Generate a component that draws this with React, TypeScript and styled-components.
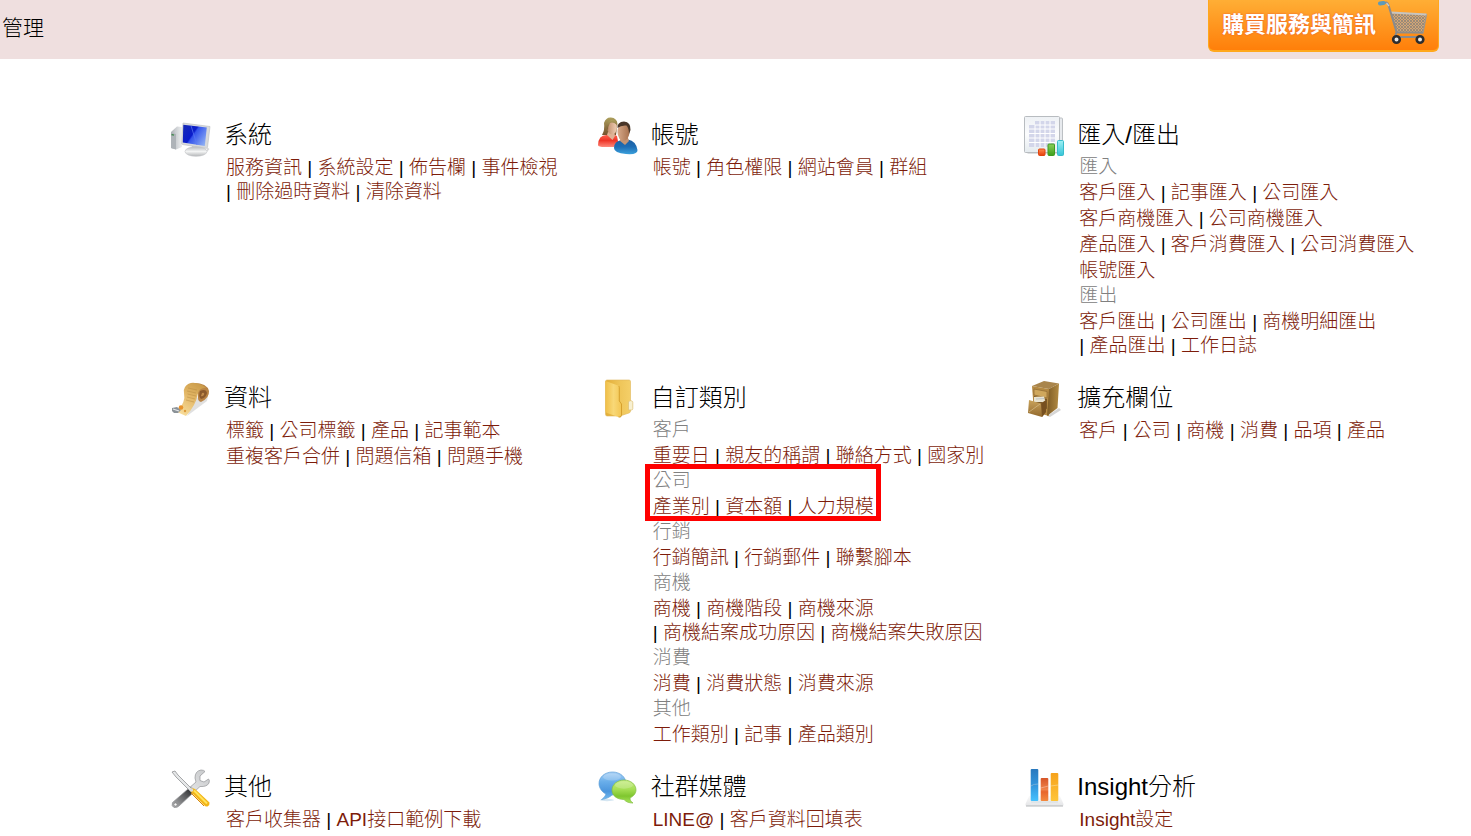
import React, { Fragment, ReactNode } from "react";
import styled, { createGlobalStyle } from "styled-components";

const GlobalStyle = createGlobalStyle`
  * { box-sizing: border-box; }
  body {
    margin: 0;
    background: #fff;
    color: #000;
    font-family: "Liberation Sans", "Noto Sans CJK TC", sans-serif;
    font-weight: 300;
  }
`;

const Header = styled.header`
  display: flex;
  align-items: flex-start;
  justify-content: space-between;
  height: 59px;
  padding: 0 32px 0 2px;
  background: #efdfdf;
`;

const PageTitle = styled.h1`
  margin: 0;
  font-size: 21px;
  font-weight: 300;
  line-height: 56px;
`;

const BuyButton = styled.button`
  display: flex;
  align-items: center;
  gap: 2px;
  height: 52px;
  padding: 0 10px 0 13px;
  border: 0 solid #ffa81c;
  border-width: 0 1px 2px;
  border-radius: 0 0 6px 6px;
  background: linear-gradient(#ffae35, #ff7f0a);
  color: #fff;
  font-family: inherit;
  font-size: 22px;
  font-weight: 700;
  line-height: 52px;
  text-shadow: 0 0 2px #e8502a;
  cursor: pointer;

  svg { align-self: flex-start; }
`;

const Grid = styled.main`
  display: grid;
  grid-template-columns: repeat(3, minmax(0, 1fr));
  row-gap: 21px;
  padding: 57px 21px 0 170px;
`;

const Card = styled.section`
  display: grid;
  grid-template-columns: 40px minmax(0, 1fr);
  column-gap: 14px;
  align-items: start;
`;

const CardTitle = styled.h2`
  margin: 0;
  padding: 3px 0;
  font-size: 24px;
  font-weight: 300;
  line-height: 32px;
`;

const CardBody = styled.div`
  padding-left: 2px;
  font-size: 19px;
  line-height: 24px;
`;

const GroupLabel = styled.h3`
  margin: 0;
  padding-top: 1px;
  color: #808080;
  font-size: 19px;
  font-weight: 300;
  line-height: 24px;
`;

const LinkRow = styled.div`
  padding-top: 2px;
`;

const LinkItem = styled.span`
  white-space: nowrap;
`;

const MenuLink = styled.a`
  color: #7d1c0a;
  text-decoration: none;

  &:hover { text-decoration: underline; }
`;

const Group = styled.div<{ $marked?: boolean }>`
  position: relative;
  width: fit-content;

  &::after {
    content: ${(p) => (p.$marked ? '""' : "none")};
    position: absolute;
    inset: -4px -7px -2px -8px;
    border: 5px solid #f00;
    pointer-events: none;
  }
`;

const Icon = ({ children }: { children: ReactNode }) => (
  <svg width="40" height="40" viewBox="0 0 40 40" overflow="visible" aria-hidden="true">
    {children}
  </svg>
);

type Stop = [number, string];
const Gradient = ({ id, stops, flat }: { id: string; stops: Stop[]; flat?: boolean }) => (
  <linearGradient id={id} x1="0" y1="0" x2={flat ? 1 : 0} y2={flat ? 0 : 1}>
    {stops.map(([offset, color]) => (
      <stop key={offset} offset={offset} stopColor={color} />
    ))}
  </linearGradient>
);

const ComputerIcon = () => (
  <Icon>
    <defs>
      <linearGradient id="screen" x1="0" y1="0.2" x2="1" y2="0.8">
        <stop offset="0" stopColor="#1428b8" />
        <stop offset="0.4" stopColor="#0a1ccb" />
        <stop offset="0.46" stopColor="#3555ec" />
        <stop offset="1" stopColor="#8fb0f4" />
      </linearGradient>
      <Gradient id="tower" flat stops={[[0, "#a9adb2"], [0.4, "#c9ccd0"], [1, "#eceeef"]]} />
      <Gradient id="stand" stops={[[0, "#b9bcbf"], [0.5, "#f3f4f4"], [1, "#b4b6b8"]]} />
    </defs>
    <path d="M1 16 7 10.500 12 11V31L6 33.500 1 32Z" fill="url(#tower)" />
    <path d="M1 17 6 18V33.500L1 32Z" fill="#aeb3b8" />
    <path d="M1.500 18.500 4 19.200" stroke="#438a4e" strokeWidth="1.400" />
    <path d="M13 7 40 10.500 37.500 31.500Q37 32.500 36 32.300L12.500 28.500Q11.500 28.200 11.700 27Z" fill="#d8dadc" stroke="#b9bcbf" strokeWidth=".6" />
    <path d="M13.300 8.800 36.800 11.500 34.800 30 12.800 26.500Z" fill="url(#screen)" />
    <path d="M21 9.700 27 29" stroke="#5a78f5" strokeWidth=".7" />
    <path d="M22 30 31 31.500 30 36H22Z" fill="#c4c6c8" />
    <ellipse cx="26" cy="35.500" rx="11" ry="4.800" fill="url(#stand)" stroke="#c3c5c7" strokeWidth=".6" />
    <path d="M37 31 39.500 33 37 36" fill="#d8d9da" />
  </Icon>
);

const UsersIcon = () => (
  <Icon>
    <defs>
      <Gradient id="red" stops={[[0, "#ff6a55"], [0.5, "#ee3427"], [1, "#ff8a7c"]]} />
      <Gradient id="blue" stops={[[0, "#1c5fa3"], [0.5, "#1f6db4"], [1, "#3aa0dc"]]} />
      <Gradient id="hair" stops={[[0, "#ada05d"], [1, "#76522e"]]} />
      <Gradient id="skinA" flat stops={[[0, "#c08d6b"], [1, "#f0cfb5"]]} />
      <Gradient id="skinB" flat stops={[[0, "#d6a98a"], [1, "#a8714d"]]} />
    </defs>
    <path d="M7 7Q9 1 14 1.500 20 2 20.500 8L19 19H5Q8 14 7 7Z" fill="url(#hair)" />
    <path d="M10 19Q1.500 18.500 1 29 1 31 8 31H17L21.500 28 20 20 16 18Z" fill="url(#red)" />
    <path d="M11 16H17L18 20 15.500 24 10 19Z" fill="#dfb296" />
    <ellipse cx="15" cy="11.500" rx="4.900" ry="7" fill="url(#skinA)" />
    <path d="M9.500 11Q10 4 16 4 20 5 20 9 16 5.500 13 7 11 10 11 15Z" fill="url(#hair)" />
    <path d="M25 24Q17 25 17 32 17 37 29 38 41 39 40.500 34 39 25 31 23.500Z" fill="url(#blue)" />
    <path d="M24 22H31L32 25 28 29 22.500 24.500Z" fill="#c59474" />
    <ellipse cx="26.500" cy="16" rx="6" ry="8.700" fill="url(#skinB)" />
    <path d="M20.500 12Q20 6 27 5.500 34 6 33.500 14L32 18Q32 12 29.500 9.500 24 9 20.500 12Z" fill="#493629" />
  </Icon>
);

const SheetIcon = () => (
  <Icon>
    <defs>
      <Gradient id="sheet" stops={[[0, "#eef1f5"], [0.5, "#fbfcfd"], [1, "#e5ebef"]]} />
      <Gradient id="barRed" stops={[[0, "#ff8b4e"], [1, "#e63e0c"]]} />
      <Gradient id="barGreen" stops={[[0, "#8bcf5a"], [1, "#3c9e1c"]]} />
      <Gradient id="barCyan" stops={[[0, "#9ff0f4"], [1, "#35c4d8"]]} />
    </defs>
    <rect x="4" y="2" width="35.500" height="35" rx="1" fill="#e7eaee" stroke="#bcc0c4" />
    <rect x="1.500" y=".5" width="35" height="36" rx="1" fill="url(#sheet)" stroke="#b8bcc0" />
    <path d="M12 5H32V31H6V9H12Z" fill="#d3d6ea" />
    <path d="M6 13H32M6 17.500H32M6 22H32M6 26.500H32M12 9H32M12 9V31M17 5V31M22 5V31M27 5V31" stroke="#fff" strokeWidth="1" />
    <rect x="15.500" y="33" width="6.500" height="6.500" rx="1" fill="url(#barRed)" stroke="#e0440e" />
    <rect x="25" y="28" width="6.500" height="11.500" rx="1" fill="url(#barGreen)" stroke="#3f9b20" />
    <rect x="34.500" y="24.500" width="6" height="15" rx="1" fill="url(#barCyan)" stroke="#37bccb" />
  </Icon>
);

const ScrollIcon = () => (
  <Icon>
    <defs>
      <linearGradient id="paper" x1=".8" y1="0" x2=".2" y2="1">
        <stop offset="0" stopColor="#c99a48" />
        <stop offset=".45" stopColor="#e3b766" />
        <stop offset="1" stopColor="#f8de9d" />
      </linearGradient>
    </defs>
    <path d="M17 37 37 22 38 17 26 19Z" fill="#ccc" opacity=".6" />
    <path d="M24 4Q37 4 39 12 39.500 19 31 23 27 22 28 15Z" fill="#b98445" />
    <path d="M30 12Q36 9 37 14 36 19 31 20 28 17 30 12Z" fill="#8b5a2d" />
    <path d="M32 14Q35 13 34 16 32 18 31 17Z" fill="#c08b4c" />
    <path d="M15 8Q19 3 25 4 33 5 36 9 29 8 27.500 16 26 26 16 37L7 33Q16 23 14 14 13.500 10 15 8Z" fill="url(#paper)" />
    <path d="M18 9 27 11M17 12 26 14M17.500 15 26 17M17 18 25 20M16 21 24 23" stroke="#b88a40" strokeWidth=".8" opacity=".6" />
    <path d="M2 29 7 28 11 31 8 34 4 34 2 32Z" fill="#8b9298" />
    <path d="M3 30 9 32" stroke="#e5e8ea" strokeWidth="1.200" />
    <circle cx="11" cy="28.500" r="2.300" fill="#e8922b" />
    <circle cx="15" cy="32" r="1.200" fill="#dc9a39" />
  </Icon>
);

const FolderIcon = () => (
  <Icon>
    <defs>
      <Gradient id="folderBack" flat stops={[[0, "#e2ad36"], [0.6, "#efc65a"], [1, "#f4cf68"]]} />
      <Gradient id="folderFront" flat stops={[[0, "#f0bf48"], [0.5, "#f8d877"], [1, "#f3c653"]]} />
    </defs>
    <path d="M10 1H32Q33.500 1 33.500 2.500V32Q33.500 33.500 32 34L23 37H10Q8.500 37 8.500 35V2.500Q8.500 1 10 1Z" fill="url(#folderBack)" stroke="#dfb75a" strokeWidth=".6" />
    <path d="M33 21.500 35 22Q35.800 22.300 35.800 23.500V29.500Q35.800 31 34.500 31H31.500V23Z" fill="#f7f0d2" stroke="#dcbf73" strokeWidth=".7" />
    <path d="M8.500 2 21 6.500Q22.300 7 22.300 8.500V22L24.500 25V36Q24.300 39 21.500 38L10 34Q8.500 33.500 8.500 32Z" fill="url(#folderFront)" />
    <path d="M21.500 7Q22.300 7.500 22.300 8.500V22L24.500 25V36Q24.300 39 21.500 38" fill="none" stroke="#cf9722" strokeWidth=".8" />
  </Icon>
);

const CabinetIcon = () => (
  <Icon>
    <defs>
      <Gradient id="side" flat stops={[[0, "#7d5b26"], [1, "#b28a42"]]} />
      <Gradient id="drawer" stops={[[0, "#c9a35c"], [1, "#93692d"]]} />
    </defs>
    <path d="M24 37 36 29 38 31 27 38Z" fill="#bbb" opacity=".6" />
    <path d="M9 7 21 2 36 4.500 26 10Z" fill="#a9854c" />
    <path d="M9 7 26 10V37L11 33Z" fill="#b58a43" />
    <path d="M26 10 36 4.500 34.500 29 24 37Z" fill="url(#side)" />
    <path d="M11 10 24 12.500V19L11 16Z" fill="#cfa75c" stroke="#8d6830" strokeWidth=".7" />
    <path d="M11 17 24 20V30L11 26Z" fill="#7a5828" />
    <path d="M11 18 21 17.500 22.500 23 11 23Z" fill="#e9e4d2" />
    <path d="M13 20 21 19.500" stroke="#b3bcc4" strokeWidth=".8" />
    <path d="M6 21 18 24.500 23 21V33L19 38 5 34Z" fill="url(#drawer)" />
    <path d="M18 24.500 19 38 23 33V21Z" fill="#775020" />
    <path d="M6 33 17 25" stroke="#dec796" strokeWidth="1" opacity=".6" />
  </Icon>
);

const ToolsIcon = () => (
  <Icon>
    <defs>
      <linearGradient id="steel" x1="1" y1="0" x2="0" y2="1">
        <stop offset="0" stopColor="#c5c7c9" />
        <stop offset=".45" stopColor="#dfe0e1" />
        <stop offset=".55" stopColor="#3c3d3f" />
        <stop offset="1" stopColor="#b6b7b9" />
      </linearGradient>
    </defs>
    <path d="M31 2Q25 3 25 10L26 14 2.500 34.500Q1 38 4 39.500 7 40 9 38L30 18.500Q37 19 39 15 40 12 38.500 11L34 14 30 12.500 30 8 35 3.500Q34 2 31 2Z" fill="url(#steel)" stroke="#929496" strokeWidth=".7" />
    <circle cx="5.500" cy="36.500" r="1.600" fill="#f7f7f7" stroke="#777" strokeWidth=".6" />
    <path d="M2 4 5 3 8 7 22 21 20 23 6 9Z" fill="#e5e7e8" stroke="#909294" strokeWidth=".8" />
    <path d="M22 20 25 21 39.500 34.500Q40 37 37.500 38.500 35.500 39 34 37L20 23Z" fill="#f3b516" />
    <path d="M24 22.500 37 35.500" stroke="#ffe35c" strokeWidth="2" />
    <path d="M21 25 34 38" stroke="#d8860b" strokeWidth="1" />
    <circle cx="21.500" cy="22" r="1.800" fill="#d9dadb" />
  </Icon>
);

const ChatIcon = () => (
  <Icon>
    <defs>
      <Gradient id="chatBlue" stops={[[0, "#a9d0f5"], [0.35, "#69aeea"], [0.7, "#4c96dd"], [1, "#72bbf0"]]} />
      <Gradient id="chatGreen" stops={[[0, "#c4ec80"], [0.4, "#a6df55"], [0.7, "#7fc62f"], [1, "#a9e65b"]]} />
    </defs>
    <ellipse cx="10" cy="32" rx="7" ry="1.200" fill="#b9d5ea" opacity=".6" />
    <path d="M15.500 4C8 4 2 9 2 15.500 2 20 5 24 9 26 8 29 6 30.500 4.500 31.500 9 31 13 29 15 27 23 27 29 22 29 15.500S23 4 15.500 4Z" fill="url(#chatBlue)" stroke="#5d9fd8" strokeWidth=".7" />
    <path d="M27 12C20.500 12 15 16.300 15 22S20 31.500 27 31.500C29 34 32 35 36 35 33.500 33.500 33 31.500 33 30 37 28 39 25 39 22 39 16.300 33.500 12 27 12Z" fill="url(#chatGreen)" stroke="#83bd43" strokeWidth=".7" />
    <ellipse cx="27" cy="17" rx="9" ry="3.700" fill="#fff" opacity=".2" />
    <ellipse cx="15" cy="9" rx="9" ry="3.500" fill="#fff" opacity=".2" />
  </Icon>
);

const InsightIcon = () => (
  <Icon>
    <defs>
      <Gradient id="iBlue" stops={[[0, "#2878bd"], [0.5, "#3295dc"], [1, "#46c2ff"]]} />
      <Gradient id="iRed" stops={[[0, "#d65528"], [0.5, "#f0834a"], [0.6, "#e8652b"], [1, "#f38a3e"]]} />
      <Gradient id="iGold" stops={[[0, "#f6a21b"], [1, "#ffc539"]]} />
      <Gradient id="base" stops={[[0, "#fafafa"], [1, "#e4e5e7"]]} />
    </defs>
    <path d="M6 28H37L40.500 36V37Q40.500 38 39 38H4Q2.500 38 2.500 37V36Z" fill="url(#base)" />
    <path d="M3 38H40" stroke="#b5b7ba" strokeWidth="1.200" />
    <path d="M8 34H35" stroke="#c9d6dd" strokeWidth="1" opacity=".7" />
    <rect x="7.700" y="1" width="7.600" height="32" rx="1" fill="url(#iBlue)" />
    <rect x="17.700" y="10" width="7.600" height="23" rx="1" fill="url(#iRed)" />
    <rect x="27.700" y="5" width="7.600" height="28" rx="1" fill="url(#iGold)" />
    <path d="M7.700 18Q11 16 15.300 16M17.700 20 25.300 18M27.700 18 35.300 17" stroke="#fff" strokeWidth=".8" opacity=".4" />
  </Icon>
);

const CartIcon = () => (
  <svg width="50" height="45" viewBox="0 0 50 45" aria-hidden="true">
    <defs>
      <pattern id="mesh" width="3" height="3" patternUnits="userSpaceOnUse">
        <rect width="3" height="3" fill="#d3a676" />
        <path d="M0 0 3 3M3 0 0 3" stroke="#8d8478" strokeWidth=".8" />
      </pattern>
    </defs>
    <path d="M13 12.500 48.500 14.500 45 33 19 32Z" fill="url(#mesh)" stroke="#9b9690" strokeWidth="1.200" />
    <path d="M13 12.500 48.500 14.500" stroke="#c9c5bf" strokeWidth="1.800" />
    <path d="M3 3 8.500 2.500Q10 3 10.500 5L18.500 32 17 37H44" fill="none" stroke="#8b8b8c" strokeWidth="2" />
    <path d="M19 32.500H45" stroke="#8e8c89" strokeWidth="2" />
    <path d="M8.500 3 11 6" stroke="#ccc" strokeWidth="1.200" />
    <path d="M2 3.500 5.500 3" stroke="#5d9ab8" strokeWidth="4" strokeLinecap="round" />
    <circle cx="18.500" cy="39.500" r="3.300" fill="#e9e9e9" stroke="#2d2d2f" strokeWidth="2.600" />
    <circle cx="42" cy="39.500" r="3.300" fill="#e9e9e9" stroke="#2d2d2f" strokeWidth="2.600" />
  </svg>
);

interface LinkGroup {
  label?: string;
  rows: string[][];
  marked?: boolean;
}
interface CardData {
  title: string;
  icon: ReactNode;
  groups: LinkGroup[];
}

const cards: CardData[] = [
  {
    title: "系統",
    icon: <ComputerIcon />,
    groups: [{ rows: [["服務資訊", "系統設定", "佈告欄", "事件檢視", "刪除過時資料", "清除資料"]] }],
  },
  {
    title: "帳號",
    icon: <UsersIcon />,
    groups: [{ rows: [["帳號", "角色權限", "網站會員", "群組"]] }],
  },
  {
    title: "匯入/匯出",
    icon: <SheetIcon />,
    groups: [
      {
        label: "匯入",
        rows: [
          ["客戶匯入", "記事匯入", "公司匯入"],
          ["客戶商機匯入", "公司商機匯入"],
          ["產品匯入", "客戶消費匯入", "公司消費匯入"],
          ["帳號匯入"],
        ],
      },
      { label: "匯出", rows: [["客戶匯出", "公司匯出", "商機明細匯出", "產品匯出", "工作日誌"]] },
    ],
  },
  {
    title: "資料",
    icon: <ScrollIcon />,
    groups: [
      {
        rows: [
          ["標籤", "公司標籤", "產品", "記事範本"],
          ["重複客戶合併", "問題信箱", "問題手機"],
        ],
      },
    ],
  },
  {
    title: "自訂類別",
    icon: <FolderIcon />,
    groups: [
      { label: "客戶", rows: [["重要日", "親友的稱謂", "聯絡方式", "國家別"]] },
      { label: "公司", rows: [["產業別", "資本額", "人力規模"]], marked: true },
      { label: "行銷", rows: [["行銷簡訊", "行銷郵件", "聯繫腳本"]] },
      { label: "商機", rows: [["商機", "商機階段", "商機來源", "商機結案成功原因", "商機結案失敗原因"]] },
      { label: "消費", rows: [["消費", "消費狀態", "消費來源"]] },
      { label: "其他", rows: [["工作類別", "記事", "產品類別"]] },
    ],
  },
  {
    title: "擴充欄位",
    icon: <CabinetIcon />,
    groups: [{ rows: [["客戶", "公司", "商機", "消費", "品項", "產品"]] }],
  },
  {
    title: "其他",
    icon: <ToolsIcon />,
    groups: [{ rows: [["客戶收集器", "API接口範例下載"]] }],
  },
  {
    title: "社群媒體",
    icon: <ChatIcon />,
    groups: [{ rows: [["LINE@", "客戶資料回填表"]] }],
  },
  {
    title: "Insight分析",
    icon: <InsightIcon />,
    groups: [{ rows: [["Insight設定"]] }],
  },
];

const Links = ({ names }: { names: string[] }) => (
  <LinkRow>
    {names.map((name, i) => (
      <Fragment key={name}>
        {i > 0 && " "}
        <LinkItem>
          {i > 0 && "| "}
          <MenuLink href="#">{name}</MenuLink>
        </LinkItem>
      </Fragment>
    ))}
  </LinkRow>
);

export default function App() {
  return (
    <>
      <GlobalStyle />
      <Header>
        <PageTitle>管理</PageTitle>
        <BuyButton type="button">
          購買服務與簡訊
          <CartIcon />
        </BuyButton>
      </Header>
      <Grid>
        {cards.map((card) => (
          <Card key={card.title}>
            {card.icon}
            <div>
              <CardTitle>{card.title}</CardTitle>
              <CardBody>
                {card.groups.map((group, i) => (
                  <Group key={i} $marked={group.marked}>
                    {group.label && <GroupLabel>{group.label}</GroupLabel>}
                    {group.rows.map((names) => (
                      <Links key={names[0]} names={names} />
                    ))}
                  </Group>
                ))}
              </CardBody>
            </div>
          </Card>
        ))}
      </Grid>
    </>
  );
}
